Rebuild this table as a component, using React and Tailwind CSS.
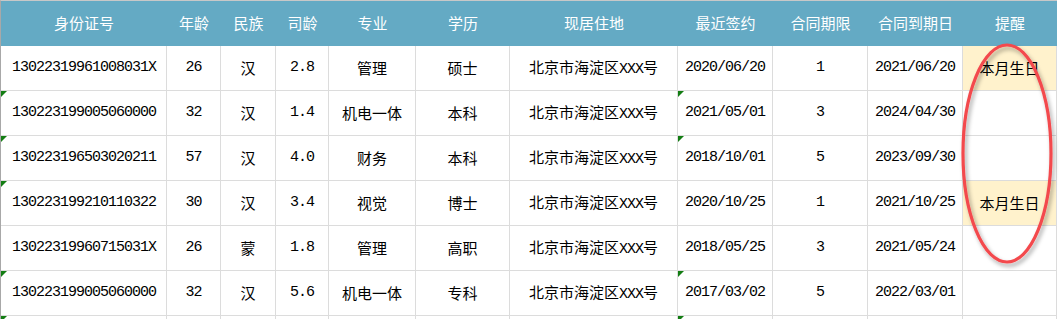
import React from "react";

const cols = [
  { key: "id", title: "身份证号", w: "w-[166px]", align: "left" },
  { key: "age", title: "年龄", w: "w-[54px]" },
  { key: "nation", title: "民族", w: "w-[55px]" },
  { key: "years", title: "司龄", w: "w-[53px]" },
  { key: "major", title: "专业", w: "w-[87px]" },
  { key: "edu", title: "学历", w: "w-[94px]" },
  { key: "addr", title: "现居住地", w: "w-[168px]" },
  { key: "sign", title: "最近签约", w: "w-[95px]" },
  { key: "term", title: "合同期限", w: "w-[95px]" },
  { key: "end", title: "合同到期日", w: "w-[95px]" },
  { key: "remind", title: "提醒", w: "w-[94px]" },
];

const rows = [
  { id: "13022319961008031X", age: "26", nation: "汉", years: "2.8", major: "管理", edu: "硕士", sign: "2020/06/20", term: "1", end: "2021/06/20", remind: "本月生日", triId: false, triSign: false },
  { id: "130223199005060000", age: "32", nation: "汉", years: "1.4", major: "机电一体", edu: "本科", sign: "2021/05/01", term: "3", end: "2024/04/30", remind: "", triId: true, triSign: true },
  { id: "130223196503020211", age: "57", nation: "汉", years: "4.0", major: "财务", edu: "本科", sign: "2018/10/01", term: "5", end: "2023/09/30", remind: "", triId: true, triSign: true },
  { id: "130223199210110322", age: "30", nation: "汉", years: "3.4", major: "视觉", edu: "博士", sign: "2020/10/25", term: "1", end: "2021/10/25", remind: "本月生日", triId: true, triSign: false },
  { id: "13022319960715031X", age: "26", nation: "蒙", years: "1.8", major: "管理", edu: "高职", sign: "2018/05/25", term: "3", end: "2021/05/24", remind: "", triId: false, triSign: false },
  { id: "130223199005060000", age: "32", nation: "汉", years: "5.6", major: "机电一体", edu: "专科", sign: "2017/03/02", term: "5", end: "2022/03/01", remind: "", triId: true, triSign: true },
  { id: "", age: "", nation: "", years: "", major: "", edu: "", sign: "", term: "", end: "", remind: "", triId: true, triSign: true, blank: true },
];

const mono = "font-['Liberation_Mono',monospace] text-[15px] tracking-[-1px]";
const cjk = "font-['Noto_Sans_CJK_SC',sans-serif] text-[15px]";

function Tri() {
  return (
    <svg className="absolute left-0 top-0" width="6" height="6" viewBox="0 0 6 6">
      <polygon points="0,0 6,0 0,6" fill="#137d13" />
    </svg>
  );
}

function Cell({ col, row }) {
  const v = row[col.key];
  let content = null;
  if (!row.blank) {
    if (col.key === "addr") {
      content = (
        <span className="whitespace-nowrap">
          <span className={cjk}>北京市海淀区</span>
          <span className={mono}>XXX</span>
          <span className={cjk}>号</span>
        </span>
      );
    } else if (["nation", "major", "edu", "remind"].includes(col.key)) {
      content = <span className={cjk}>{v}</span>;
    } else {
      content = <span className={mono}>{v}</span>;
    }
  }
  const yellow = col.key === "remind" && row.remind;
  return (
    <div
      className={`relative ${col.w} shrink-0 h-full flex items-center border-r border-[#dcdcdc] text-black ${
        col.align === "left" ? "justify-start pl-[11px]" : "justify-center"
      } ${yellow ? "bg-[#fff2cc]" : "bg-white"}`}
    >
      {col.key === "id" && row.triId && <Tri />}
      {col.key === "sign" && row.triSign && <Tri />}
      {content}
    </div>
  );
}

export default function App() {
  return (
    <div className="relative w-[1062px] h-[319px] overflow-hidden bg-white">
      <div className="w-[1057px] border-l border-l-[#a8a8a8] border-t border-t-[#c8c8c8]">
        <div className="flex h-[45px] bg-[#64aac4]">
          {cols.map((c) => (
            <div
              key={c.key}
              className={`${c.w} shrink-0 flex items-center justify-center text-white ${cjk} pb-[1px]`}
            >
              {c.title}
            </div>
          ))}
        </div>
        {rows.map((r, i) => (
          <div key={i} className="flex h-[45px] border-b border-[#dcdcdc]">
            {cols.map((c) => (
              <Cell key={c.key} col={c} row={r} />
            ))}
          </div>
        ))}
      </div>
      <svg className="absolute left-0 top-0 pointer-events-none" width="1062" height="319">
        <defs>
          <filter id="sh" x="-30%" y="-30%" width="160%" height="160%">
            <feDropShadow dx="2" dy="3" stdDeviation="2" floodColor="#000" floodOpacity="0.35" />
          </filter>
        </defs>
        <ellipse cx="1007" cy="153.5" rx="44" ry="108.5" fill="none" stroke="#f34a4d" strokeWidth="3.2" filter="url(#sh)" />
      </svg>
    </div>
  );
}
